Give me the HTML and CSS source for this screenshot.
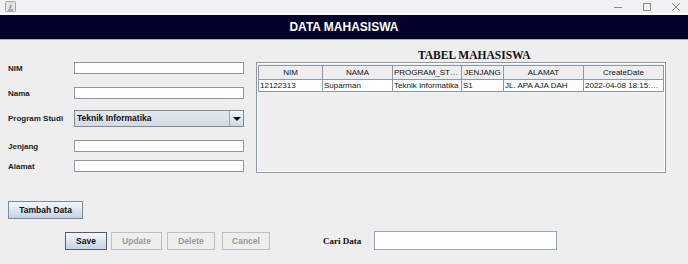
FILE: index.html
```html
<!DOCTYPE html>
<html>
    <head>
        <title>Data Mahasiswa</title>
        <link rel="stylesheet" href="styles.css">
    </head>

    <body>
        <div class="titleBar">
            <svg class="appIcon" width="11" height="11" viewBox="0 0 11 11">
                <rect x="0.5" y="0.5" width="10" height="10" rx="1" fill="#dfe6ef" stroke="#9aa6b4"/>
                <path d="M3 8.5h5v1H3z" fill="#5577aa"/>
                <path d="M4 7.5c0-2 2-2.5 1.5-5 1.5 1.5 1.5 3 .5 5z" fill="#e08a2c"/>
            </svg>
            <div class="windowControls">
                <svg width="10" height="10" viewBox="0 0 10 10"><path d="M1 5.5h8" stroke="#8a8a8a"/></svg>
                <svg width="10" height="10" viewBox="0 0 10 10"><rect x="1.5" y="1.5" width="7" height="7" fill="none" stroke="#8a8a8a"/></svg>
                <svg width="10" height="10" viewBox="0 0 10 10"><path d="M1 1l8 8M9 1l-8 8" stroke="#8a8a8a"/></svg>
            </div>
        </div>

        <div class="banner">DATA MAHASISWA</div>

        <div class="mainArea">
            <form class="studentForm" onsubmit="return false;">
                <div class="formRow rowNim">
                    <label for="nimInput">NIM</label>
                    <input type="text" id="nimInput">
                </div>
                <div class="formRow rowNama">
                    <label for="namaInput">Nama</label>
                    <input type="text" id="namaInput">
                </div>
                <div class="formRow rowProdi">
                    <label>Program Studi</label>
                    <div class="comboBox">
                        <span class="comboValue">Teknik Informatika</span>
                        <span class="comboArrow"></span>
                    </div>
                </div>
                <div class="formRow rowJenjang">
                    <label for="jenjangInput">Jenjang</label>
                    <input type="text" id="jenjangInput">
                </div>
                <div class="formRow rowAlamat">
                    <label for="alamatInput">Alamat</label>
                    <input type="text" id="alamatInput">
                </div>
            </form>

            <div class="tablePanel">
                <h2 class="tableTitle">TABEL MAHASISWA</h2>
                <div class="scrollBox">
                    <table class="dataTable">
                        <colgroup>
                            <col style="width: 64px">
                            <col style="width: 70px">
                            <col style="width: 69px">
                            <col style="width: 42px">
                            <col style="width: 80px">
                            <col style="width: 80px">
                        </colgroup>
                        <thead>
                            <tr>
                                <th>NIM</th>
                                <th>NAMA</th>
                                <th>PROGRAM_STUDI</th>
                                <th>JENJANG</th>
                                <th>ALAMAT</th>
                                <th>CreateDate</th>
                            </tr>
                        </thead>
                        <tbody>
                            <tr>
                                <td>12122313</td>
                                <td>Suparman</td>
                                <td>Teknik Informatika</td>
                                <td>S1</td>
                                <td>JL. APA AJA DAH</td>
                                <td>2022-04-08 18:15:08.0</td>
                            </tr>
                        </tbody>
                    </table>
                </div>
            </div>
        </div>

        <div class="addRow">
            <button class="btn btnAdd">Tambah Data</button>
        </div>

        <div class="bottomRow">
            <button class="btn btnSave">Save</button>
            <button class="btn btnUpdate" disabled>Update</button>
            <button class="btn btnDelete" disabled>Delete</button>
            <button class="btn btnCancel" disabled>Cancel</button>
            <label class="searchLabel" for="searchInput">Cari Data</label>
            <input type="text" id="searchInput" class="searchInput">
        </div>
    </body>
</html>
```

FILE: styles.css
```css
body {
    margin: 0;
    background-color: #eeeeee;
    font-family: "Liberation Sans", Arial, sans-serif;
    overflow: hidden;
}

.titleBar {
    height: 13px;
    display: flex;
    align-items: center;
    justify-content: space-between;
    padding: 0 7px 0 5px;
    background-color: #f2f2f2;
    border-bottom: 2px solid #fbfbfb;
}

.appIcon {
    display: block;
}

.windowControls {
    display: flex;
    gap: 19px;
}

.windowControls svg {
    display: block;
}

.banner {
    height: 24px;
    line-height: 24px;
    background-color: #02022a;
    border-bottom: 1px solid #a9adb8;
    color: white;
    font-weight: bold;
    font-size: 12px;
    text-align: center;
}

.mainArea {
    display: flex;
    height: 133px;
}

.studentForm {
    width: 236px;
    padding: 22px 0 0 8px;
    margin: 0;
    display: flex;
    flex-direction: column;
}

.formRow {
    display: flex;
    align-items: center;
}

.formRow label {
    width: 66px;
    font-size: 8px;
    font-weight: bold;
    color: #222;
}

.formRow input {
    width: 170px;
    height: 12px;
    box-sizing: border-box;
    margin: 0;
    padding: 0 2px;
    border: 1px solid #8c97a5;
    background-color: white;
    outline: none;
}

.rowNama {
    margin-top: 13px;
}

.rowProdi {
    margin-top: 11px;
}

.rowJenjang {
    margin-top: 13px;
}

.rowAlamat {
    margin-top: 8px;
}

.comboBox {
    width: 170px;
    height: 17px;
    box-sizing: border-box;
    display: flex;
    border: 1px solid #7d8a99;
    background: linear-gradient(#e4e9ef, #d3dbe4);
}

.comboValue {
    flex: 1;
    padding-left: 2px;
    font-size: 8.5px;
    font-weight: bold;
    line-height: 15px;
    color: #111;
}

.comboArrow {
    width: 13px;
    border-left: 1px solid #9aa6b4;
    background: linear-gradient(#f2f5f8, #cfd9e4);
    position: relative;
}

.comboArrow::after {
    content: '';
    position: absolute;
    left: 3px;
    top: 6px;
    border-left: 4px solid transparent;
    border-right: 4px solid transparent;
    border-top: 4px solid #111;
}

.tablePanel {
    margin-left: 12px;
    width: 410px;
}

.tableTitle {
    margin: 8px 0 0 162px;
    height: 14px;
    line-height: 14px;
    font-family: "Liberation Serif", "Times New Roman", serif;
    font-size: 11.5px;
    font-weight: bold;
    color: #111;
}

.scrollBox {
    height: 111px;
    box-sizing: border-box;
    border: 1px solid #8e99a7;
    box-shadow: inset 1px 1px 0 white, inset -1px -1px 0 white;
    padding: 2px 1px 1px 1px;
    background-color: #eeeeee;
}

.dataTable {
    border-collapse: collapse;
    table-layout: fixed;
    width: 405px;
    font-size: 8px;
    color: #111;
}

.dataTable th {
    height: 13px;
    padding: 0 1px;
    font-weight: normal;
    border: 1px solid #8e99a7;
    background-color: #eeeeee;
    white-space: nowrap;
    overflow: hidden;
    text-overflow: ellipsis;
}

.dataTable td {
    height: 11px;
    padding: 0 1px;
    background-color: white;
    border: 1px solid #8e99a7;
    white-space: nowrap;
    overflow: hidden;
    text-overflow: ellipsis;
}

.addRow {
    padding: 28px 0 0 8px;
}

.btn {
    height: 18px;
    margin: 0;
    padding: 0;
    box-sizing: border-box;
    font-family: "Liberation Sans", Arial, sans-serif;
    font-size: 8.5px;
    font-weight: bold;
    color: #111;
    border: 1px solid #7a8a99;
    border-radius: 0;
    background: linear-gradient(#f4f7fa, #c3d4e6);
    cursor: pointer;
}

.btn:disabled {
    color: #9a9a9a;
    border-color: #b8c0ca;
    background: #eeeeee;
    cursor: default;
}

.btnAdd {
    display: block;
    width: 75px;
}

.bottomRow {
    display: flex;
    align-items: center;
    height: 19px;
    padding: 12px 0 0 65px;
}

.btnSave {
    width: 42px;
    border-color: #4f5d6c;
}

.btnUpdate {
    width: 51px;
    margin-left: 4px;
}

.btnDelete {
    width: 48px;
    margin-left: 5px;
}

.btnCancel {
    width: 48px;
    margin-left: 7px;
}

.searchLabel {
    margin-left: 53px;
    width: 51px;
    font-family: "Liberation Serif", "Times New Roman", serif;
    font-size: 9px;
    font-weight: bold;
    color: #111;
}

.searchInput {
    width: 183px;
    height: 19px;
    box-sizing: border-box;
    margin: 0;
    border: 1px solid #9aa5b3;
    background-color: white;
    outline: none;
}
```
